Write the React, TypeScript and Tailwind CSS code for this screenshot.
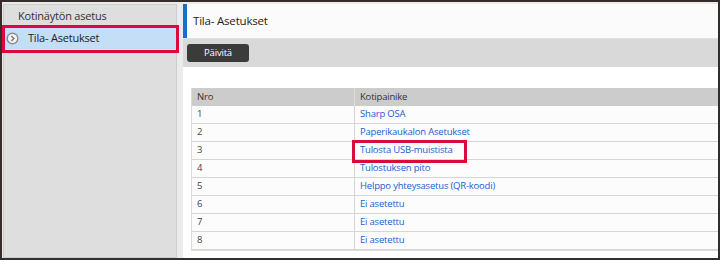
const rows = [
  { nro: '1', label: 'Sharp OSA' },
  { nro: '2', label: 'Paperikaukalon Asetukset' },
  { nro: '3', label: 'Tulosta USB-muistista', marked: true },
  { nro: '4', label: 'Tulostuksen pito' },
  { nro: '5', label: 'Helppo yhteysasetus (QR-koodi)' },
  { nro: '6', label: 'Ei asetettu' },
  { nro: '7', label: 'Ei asetettu' },
  { nro: '8', label: 'Ei asetettu' },
]

const ArrowIcon = () => (
  <svg width="13" height="13" viewBox="0 0 13 13">
    <circle cx="6.5" cy="6.5" r="6" fill="#8a8a8a" />
    <circle cx="6.5" cy="6.5" r="4.6" fill="#f4f4f4" />
    <path d="M5.4 4 L7.9 6.5 L5.4 9" stroke="#7a7a7a" strokeWidth="1.5" fill="none" />
  </svg>
)

const App = () => {
  return (
    <div
      className="w-[720px] h-[260px] border-2 border-[#352c2c] bg-[#ebebeb] flex pt-[2px] pl-[1px] overflow-hidden tracking-[-0.2px]"
      style={{ fontFamily: '"Open Sans", "Noto Sans", sans-serif' }}
    >
      {/* sidebar */}
      <div className="w-[174px] shrink-0 bg-[#dedede] border border-[#cdcdcd] flex flex-col">
        <div className="h-[22px] flex items-center pl-[14px] text-[11px] text-[#333]">
          Kotinäytön asetus
        </div>
        <div className="relative h-[21px] bg-[#c5def8] flex items-center mt-[1px]">
          <div className="pl-[2px] flex items-center">
            <ArrowIcon />
          </div>
          <span className="ml-[9px] text-[11px] text-[#222]">Tila- Asetukset</span>
          <div className="absolute left-[-2px] right-[-3px] top-[-3px] bottom-[-4px] border-[3px] border-[#d90a3c]" />
        </div>
      </div>

      {/* main */}
      <div className="flex-1 ml-[6px] flex flex-col bg-white">
        <div className="h-[34px] bg-[#fbfbfb] border-l-4 border-[#1a6fc0] flex items-center pl-[6px] text-[11.5px] text-[#222]">
          Tila- Asetukset
        </div>
        <div className="h-[29px] bg-[#d9d9d9] border-t border-[#e2e2e2] flex items-center pl-1">
          <button className="w-[62px] h-[18px] rounded-[3px] bg-[#3b3b3b] text-white text-[9.5px] flex items-center justify-center">
            Päivitä
          </button>
        </div>
        <div className="pl-2 pt-[21px] bg-white flex-1">
          <div className="border-l border-[#dadada] border-b">
            <div className="flex h-[18px] bg-[#cccccc] text-[9.5px] text-[#333] items-center">
              <div className="w-[163px] pl-[5px] border-r border-[#dcdcdc] h-full flex items-center">Nro</div>
              <div className="pl-[5px]">Kotipainike</div>
            </div>
            {rows.map((row) => (
              <div
                key={row.nro}
                className="flex h-[18px] bg-[#fcfcfc] border-b border-[#d6d6d6] text-[9.5px] items-center"
              >
                <div className="w-[163px] pl-[5px] border-r border-[#d6d6d6] h-full flex items-center text-[#444]">
                  {row.nro}
                </div>
                <div className="relative pl-[5px] text-[#1a5fd0]">
                  {row.label}
                  {row.marked && (
                    <div className="absolute left-[-3px] right-[-15px] top-[-3px] bottom-[-5px] border-[3px] border-[#d90a3c]" />
                  )}
                </div>
              </div>
            ))}
          </div>
        </div>
      </div>
    </div>
  )
}

export default App
